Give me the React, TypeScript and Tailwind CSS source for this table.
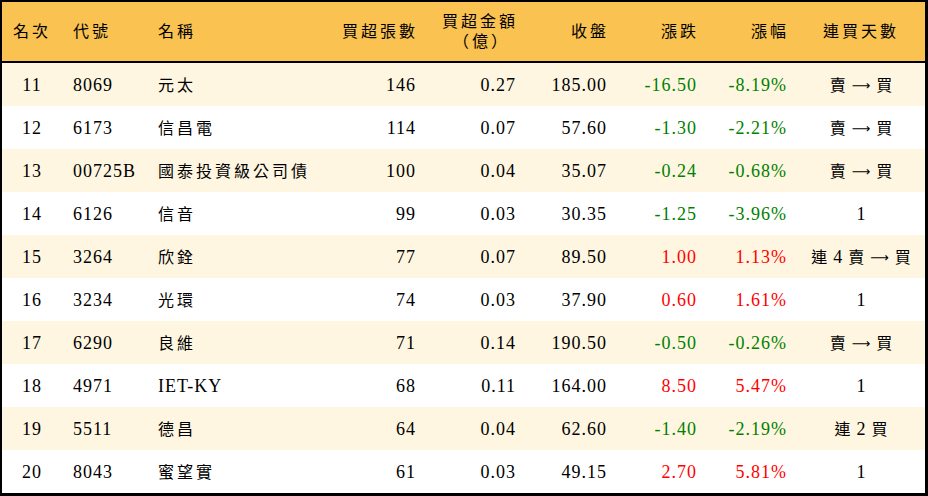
import React from "react";

type Row = {
  rank: string;
  code: string;
  name: string;
  vol: string;
  amt: string;
  close: string;
  chg: string;
  pct: string;
  streak: string;
};

const rows: Row[] = [
  { rank: "11", code: "8069", name: "元太", vol: "146", amt: "0.27", close: "185.00", chg: "-16.50", pct: "-8.19%", streak: "賣 → 買" },
  { rank: "12", code: "6173", name: "信昌電", vol: "114", amt: "0.07", close: "57.60", chg: "-1.30", pct: "-2.21%", streak: "賣 → 買" },
  { rank: "13", code: "00725B", name: "國泰投資級公司債", vol: "100", amt: "0.04", close: "35.07", chg: "-0.24", pct: "-0.68%", streak: "賣 → 買" },
  { rank: "14", code: "6126", name: "信音", vol: "99", amt: "0.03", close: "30.35", chg: "-1.25", pct: "-3.96%", streak: "1" },
  { rank: "15", code: "3264", name: "欣銓", vol: "77", amt: "0.07", close: "89.50", chg: "1.00", pct: "1.13%", streak: "連 4 賣 → 買" },
  { rank: "16", code: "3234", name: "光環", vol: "74", amt: "0.03", close: "37.90", chg: "0.60", pct: "1.61%", streak: "1" },
  { rank: "17", code: "6290", name: "良維", vol: "71", amt: "0.14", close: "190.50", chg: "-0.50", pct: "-0.26%", streak: "賣 → 買" },
  { rank: "18", code: "4971", name: "IET-KY", vol: "68", amt: "0.11", close: "164.00", chg: "8.50", pct: "5.47%", streak: "1" },
  { rank: "19", code: "5511", name: "德昌", vol: "64", amt: "0.04", close: "62.60", chg: "-1.40", pct: "-2.19%", streak: "連 2 買" },
  { rank: "20", code: "8043", name: "蜜望實", vol: "61", amt: "0.03", close: "49.15", chg: "2.70", pct: "5.81%", streak: "1" },
];

const c1 = "w-[60px] shrink-0 text-center";
const c2 = "w-[85px] shrink-0 pl-[11px]";
const c3 = "w-[180px] shrink-0 pl-[11px]";
const c4 = "w-[99px] shrink-0 text-right pr-[10px]";
const c5 = "w-[100px] shrink-0 text-right pr-[10px]";
const c6 = "w-[91px] shrink-0 text-right pr-[10px]";
const c7 = "w-[90px] shrink-0 text-right pr-[10px]";
const c8 = "w-[90px] shrink-0 text-right pr-[10px]";
const c9 = "w-[128px] shrink-0 flex justify-center";

const cjk = "text-[16px] tracking-[3px]";

function Streak({ s }: { s: string }) {
  const parts = s.split(" ");
  return (
    <span className="flex items-center justify-center gap-[6px]">
      {parts.map((p, i) =>
        p === "→" ? (
          <span
            key={i}
            className="text-[13px] tracking-normal leading-none"
            style={{ fontFamily: '"DejaVu Sans", sans-serif' }}
          >
            ⟶
          </span>
        ) : /[0-9]/.test(p) ? (
          <span key={i} className="text-[18px] tracking-normal">{p}</span>
        ) : (
          <span key={i} className="text-[16px] tracking-normal">{p}</span>
        )
      )}
    </span>
  );
}

export default function App() {
  return (
    <div
      className="w-[928px] h-[496px] bg-white text-black border-l-2 border-t-2 border-r-[3px] border-b-[3px] border-black flex flex-col"
      style={{ fontFamily: '"Liberation Serif", "Noto Sans CJK TC", serif' }}
    >
      <div className="h-[59px] shrink-0 bg-[#F9C251] flex items-center text-[16px] tracking-[3px] leading-[20px]">
        <div className={c1}>名次</div>
        <div className={c2}>代號</div>
        <div className={c3}>名稱</div>
        <div className={c4 + " !pr-[8px]"}>買超張數</div>
        <div className={c5 + " !pr-[8px] flex flex-col items-end"}>
          <span>買超金額</span>
          <span className="pr-[8px]">（億）</span>
        </div>
        <div className={c6 + " !pr-[8px]"}>收盤</div>
        <div className={c7 + " !pr-[8px]"}>漲跌</div>
        <div className={c8 + " !pr-[8px]"}>漲幅</div>
        <div className={c9}>連買天數</div>
      </div>
      <div className="h-[2px] shrink-0 bg-black" />
      {rows.map((r, i) => {
        const neg = r.chg.startsWith("-");
        const color = neg ? "text-[#008000]" : "text-[#FF0000]";
        return (
          <div
            key={r.rank}
            className={
              "h-[43px] shrink-0 flex items-center pt-[2px] text-[18px] tracking-[1px] " +
              (i % 2 === 0 ? "bg-[#FEF6E1]" : "bg-white")
            }
          >
            <div className={c1}>{r.rank}</div>
            <div className={c2}>{r.code}</div>
            <div className={c3}>
              {/[A-Z]/.test(r.name) ? (
                <span>{r.name}</span>
              ) : (
                <span className={cjk}>{r.name}</span>
              )}
            </div>
            <div className={c4}>{r.vol}</div>
            <div className={c5}>{r.amt}</div>
            <div className={c6}>{r.close}</div>
            <div className={c7 + " " + color}>{r.chg}</div>
            <div className={c8 + " " + color}>{r.pct}</div>
            <div className={c9}>
              <Streak s={r.streak} />
            </div>
          </div>
        );
      })}
    </div>
  );
}
